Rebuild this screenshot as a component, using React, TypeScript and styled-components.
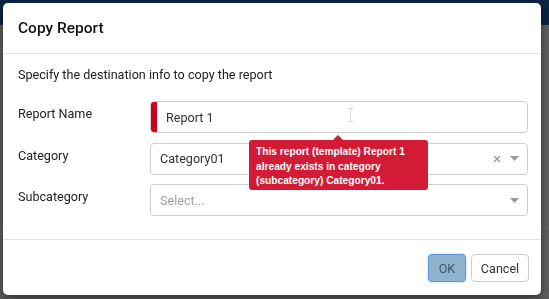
import React from "react";
import styled, { createGlobalStyle } from "styled-components";

const Global = createGlobalStyle`
  html, body { margin: 0; padding: 0; }
  body { font-family: Roboto, "Liberation Sans", sans-serif; background: #5e5e5e; overflow: hidden; }
`;

const Page = styled.div`
  width: 549px;
  height: 299px;
  display: flex;
  flex-direction: column;
  background: #5e5e5e;
`;

const TopBar = styled.div`
  height: 25px;
  background: #0d2544;
  flex: none;
`;

const PageBody = styled.div`
  flex: 1;
  display: flex;
  flex-direction: column;
  justify-content: flex-end;
`;

const PageLine = styled.div`
  height: 1px;
  background: #6a6a6a;
  margin-bottom: 71px;
`;

const Modal = styled.div`
  position: fixed;
  left: 3px;
  top: 3px;
  width: 538px;
  height: 292px;
  background: #fff;
  border-radius: 5px;
  box-shadow: 0 3px 9px rgba(0, 0, 0, 0.5);
  display: flex;
  flex-direction: column;
  color: #222;
`;

const Header = styled.div`
  height: 50px;
  flex: none;
  display: flex;
  align-items: center;
  padding: 0 15px;
  border-bottom: 1px solid #e5e5e5;
`;

const Title = styled.h4`
  margin: 0;
  font-size: 15.5px;
  font-weight: 500;
  color: #111;
`;

const Body = styled.div`
  flex: 1;
  padding: 12px 13px 0 15px;
`;

const Intro = styled.p`
  margin: 0 0 17px;
  font-size: 12.6px;
  line-height: 18px;
  color: #222;
`;

const Form = styled.div`
  display: grid;
  grid-template-columns: 132px 1fr;
  row-gap: 9.5px;
`;

const Label = styled.label`
  font-size: 12.6px;
  line-height: 18px;
  padding-top: 4px;
  color: #222;
`;

const Field = styled.div`
  position: relative;
`;

const Input = styled.div<{ $invalid?: boolean }>`
  height: 32px;
  box-sizing: border-box;
  border: 1px solid #cfcfcf;
  border-radius: 4px;
  display: flex;
  align-items: center;
  padding-left: ${(p) => (p.$invalid ? "15px" : "9px")};
  font-size: 12.6px;
  color: #333;
  position: relative;
  overflow: hidden;
  &::before {
    content: "";
    display: ${(p) => (p.$invalid ? "block" : "none")};
    position: absolute;
    left: 0;
    top: 0;
    bottom: 0;
    width: 6px;
    background: #d0021b;
  }
`;

const Placeholder = styled.span`
  color: #a0a0a0;
`;

const Value = styled.span`
  flex: 1;
`;

const Icons = styled.div`
  display: flex;
  align-items: center;
  gap: 9px;
  padding-right: 8px;
  color: #999;
`;

const Cursor = styled.svg`
  position: absolute;
  left: 197px;
  top: 6px;
`;

const Tooltip = styled.div`
  position: absolute;
  left: 99px;
  top: 39px;
  width: 179px;
  height: 50px;
  box-sizing: border-box;
  background: #d41b35;
  border-radius: 3px;
  color: #fff;
  font-family: "Liberation Sans", Arial, sans-serif;
  font-weight: bold;
  font-size: 10.2px;
  line-height: 14.5px;
  padding: 5px 7px;
  z-index: 2;
  &::before {
    content: "";
    position: absolute;
    top: -5px;
    left: 84px;
    border-left: 5px solid transparent;
    border-right: 5px solid transparent;
    border-bottom: 5px solid #d41b35;
  }
`;

const Footer = styled.div`
  flex: none;
  border-top: 1px solid #e5e5e5;
  display: flex;
  justify-content: flex-end;
  gap: 5px;
  padding: 14px 12px 13px;
`;

const Button = styled.button<{ $primary?: boolean }>`
  height: 28px;
  width: ${(p) => (p.$primary ? "38px" : "58px")};
  box-sizing: border-box;
  font-family: Roboto, "Liberation Sans", sans-serif;
  font-size: 12.6px;
  border-radius: 4px;
  padding: 0;
  border: 1px solid ${(p) => (p.$primary ? "#5d9be0" : "#cccccc")};
  background: ${(p) => (p.$primary ? "#8fb3cc" : "#fff")};
  color: ${(p) => (p.$primary ? "#3b5675" : "#333")};
  box-shadow: ${(p) => (p.$primary ? "0 0 2px rgba(66,139,230,0.6)" : "none")};
`;

const ClearIcon = () => (
  <svg width="8" height="8" viewBox="0 0 8 8">
    <path d="M1 1L7 7M7 1L1 7" stroke="#999" strokeWidth="1.3" />
  </svg>
);

const Caret = () => (
  <svg width="9" height="5" viewBox="0 0 9 5">
    <path d="M0 0H9L4.5 5Z" fill="#999" />
  </svg>
);

export default function App() {
  return (
    <>
      <Global />
      <Page>
        <TopBar />
        <PageBody>
          <PageLine />
        </PageBody>
      </Page>
      <Modal>
        <Header>
          <Title>Copy Report</Title>
        </Header>
        <Body>
          <Intro>Specify the destination info to copy the report</Intro>
          <Form>
            <Label>Report Name</Label>
            <Field>
              <Input $invalid>
                <Value>Report 1</Value>
                <Cursor width="5" height="14" viewBox="0 0 5 14">
                  <path d="M0 0.5H5M0 13.5H5M2.5 0.5V13.5" stroke="#d8d8d8" strokeWidth="1" fill="none" />
                </Cursor>
              </Input>
              <Tooltip>
                This report (template) Report 1 already exists in category (subcategory) Category01.
              </Tooltip>
            </Field>
            <Label>Category</Label>
            <Field>
              <Input>
                <Value>Category01</Value>
                <Icons>
                  <ClearIcon />
                  <Caret />
                </Icons>
              </Input>
            </Field>
            <Label>Subcategory</Label>
            <Field>
              <Input>
                <Value>
                  <Placeholder>Select...</Placeholder>
                </Value>
                <Icons>
                  <Caret />
                </Icons>
              </Input>
            </Field>
          </Form>
        </Body>
        <Footer>
          <Button $primary>OK</Button>
          <Button>Cancel</Button>
        </Footer>
      </Modal>
    </>
  );
}
